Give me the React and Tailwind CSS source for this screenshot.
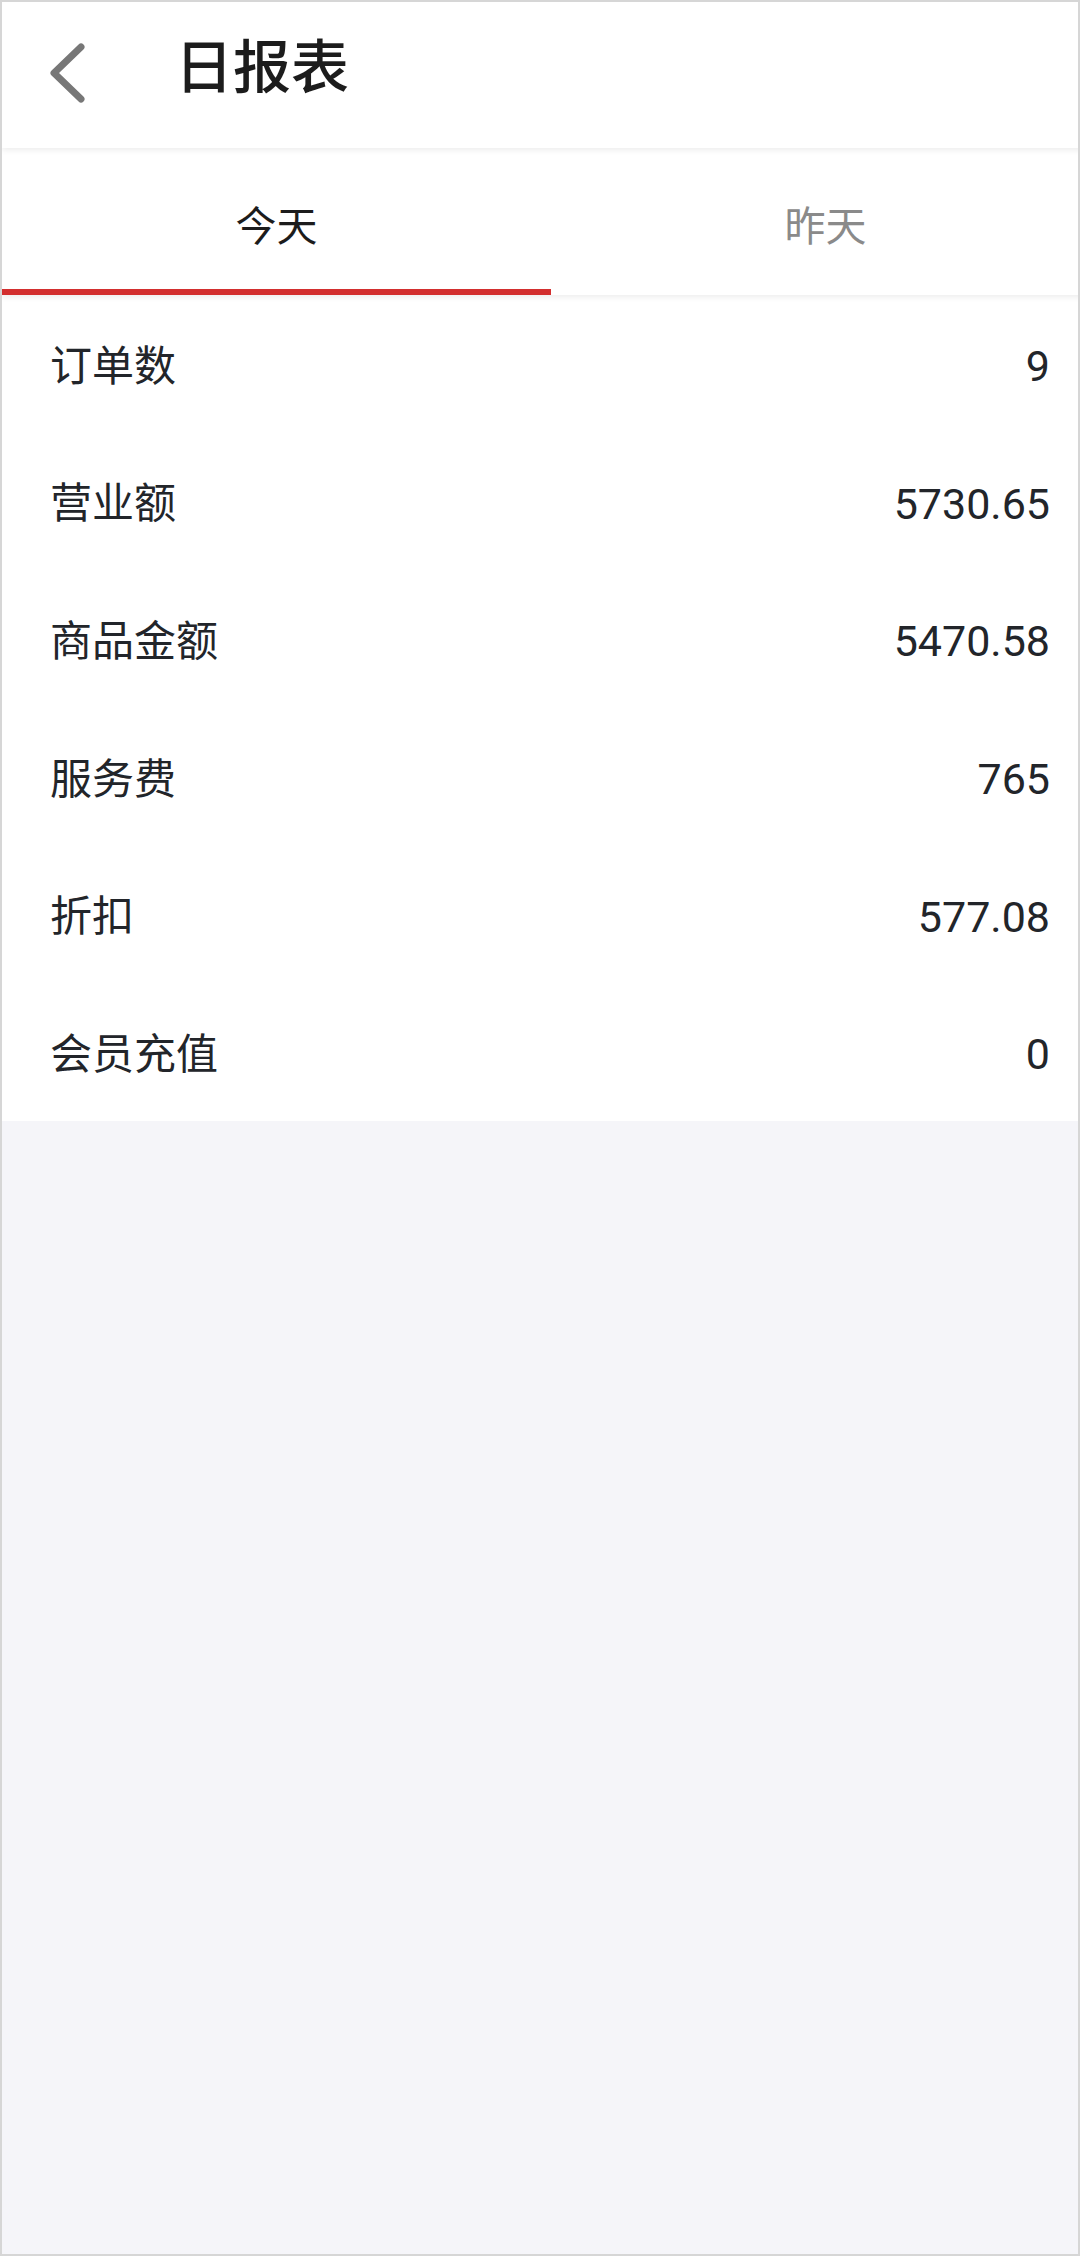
import React from "react";

const rows = [
  { label: "订单数", value: "9" },
  { label: "营业额", value: "5730.65" },
  { label: "商品金额", value: "5470.58" },
  { label: "服务费", value: "765" },
  { label: "折扣", value: "577.08" },
  { label: "会员充值", value: "0" },
];

const BackIcon = () => (
  <svg width="40" height="64" viewBox="0 0 40 64" fill="none">
    <path
      d="M33 6 L6 32 L33 58"
      stroke="#777777"
      strokeWidth="7"
      strokeLinecap="round"
      strokeLinejoin="round"
    />
  </svg>
);

const App = () => {
  return (
    <div
      className="w-[1080px] h-[2256px] border-2 border-[#d6d6d6] bg-[#f5f5f9] overflow-hidden"
      style={{ fontFamily: 'Roboto, "Noto Sans CJK SC", sans-serif' }}
    >
      <div className="w-[1098px]">
        <div className="relative z-20 h-[146px] bg-white flex items-center shadow-[0_2px_6px_rgba(0,0,0,0.08)]">
          <div className="w-[173px] pl-[46px] flex items-center -mt-[4px]">
            <BackIcon />
          </div>
          <div className="text-[58px] font-medium text-[#1c1c1c] leading-none -mt-[14px]">日报表</div>
        </div>

        <div className="relative z-10 h-[147px] bg-white flex shadow-[0_2px_6px_rgba(0,0,0,0.08)]">
          <div className="flex-1 relative flex items-center justify-center">
            <span className="text-[41px] text-[#1c1c1c] leading-none mt-[12px]">今天</span>
            <div className="absolute left-0 right-0 bottom-0 h-[6px] bg-[#d32f2f]" />
          </div>
          <div className="flex-1 flex items-center justify-center">
            <span className="text-[41px] text-[#8a8a8a] leading-none mt-[12px]">昨天</span>
          </div>
        </div>

        <div className="bg-white">
          {rows.map((row) => (
            <div
              key={row.label}
              className="h-[137.6px] pl-[48px] pr-[50px] flex items-center justify-between text-[42px] text-[#22252a]"
            >
              <span className="leading-none mt-[6px]">{row.label}</span>
              <span className="leading-none text-[43px] mt-[6px]">{row.value}</span>
            </div>
          ))}
        </div>
      </div>
    </div>
  );
};

export default App;
